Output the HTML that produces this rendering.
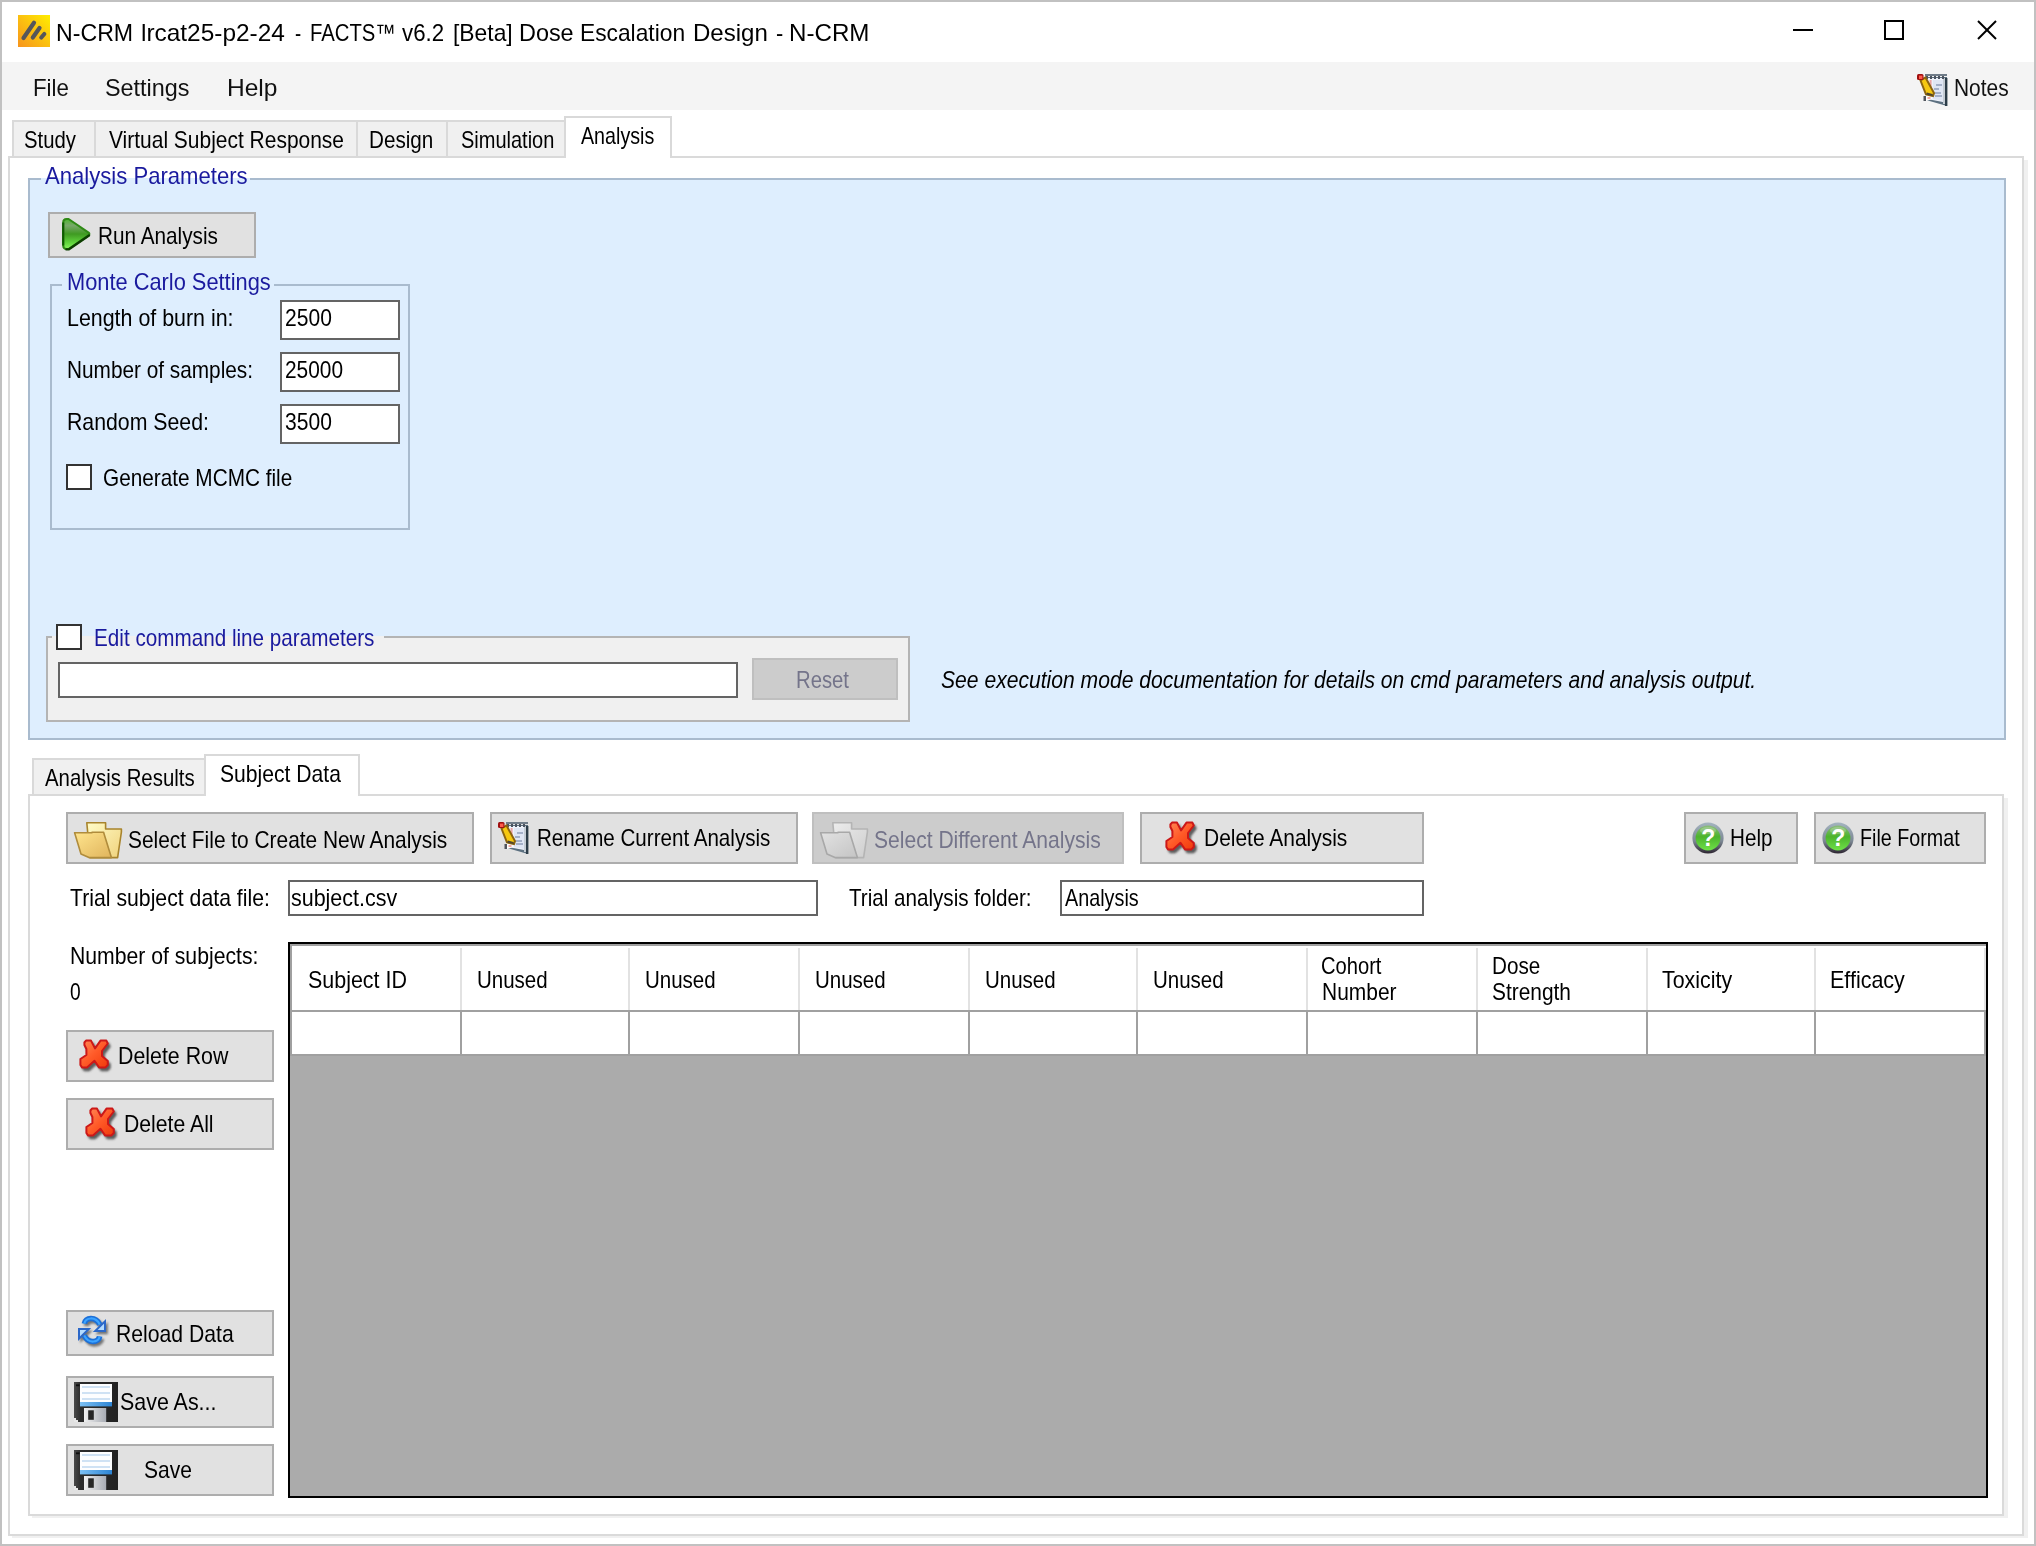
<!DOCTYPE html>
<html lang="en"><head><meta charset="utf-8"><title>N-CRM lrcat25-p2-24 - FACTS™ v6.2 [Beta] Dose Escalation Design - N-CRM</title>
<style>
html,body{margin:0;padding:0;}
body{width:2036px;height:1546px;position:relative;overflow:hidden;background:#fff;font-family:"Liberation Sans",sans-serif;}
.b{position:absolute;box-sizing:border-box;}
.t{position:absolute;white-space:pre;line-height:30px;transform-origin:0 0;display:block;}
svg{position:absolute;overflow:visible;}
</style></head>
<body>
<div class="b" style="left:0px;top:0px;width:2036px;height:1546px;background:#fff;border:2px solid #c1c1c1;"></div>
<svg width="0" height="0" style="left:0;top:0"><defs>
<linearGradient id="ig" x1="1" y1="0" x2="0" y2="1"><stop offset="0" stop-color="#ffee00"/><stop offset="0.5" stop-color="#fbc010"/><stop offset="1" stop-color="#f7941d"/></linearGradient>
<linearGradient id="pg" x1="0" y1="0" x2="0" y2="1"><stop offset="0" stop-color="#4cb62e"/><stop offset="0.22" stop-color="#78a86a"/><stop offset="0.5" stop-color="#3f9a22"/><stop offset="0.8" stop-color="#62d63e"/><stop offset="1" stop-color="#8cf562"/></linearGradient>
<linearGradient id="fb" x1="0" y1="0" x2="1" y2="1"><stop offset="0" stop-color="#fffcc8"/><stop offset="1" stop-color="#f0d27c"/></linearGradient>
<linearGradient id="ff" x1="0" y1="0" x2="1" y2="1"><stop offset="0" stop-color="#ffe58e"/><stop offset="1" stop-color="#e0b45c"/></linearGradient>
<linearGradient id="gb" x1="0" y1="0" x2="1" y2="1"><stop offset="0" stop-color="#ececec"/><stop offset="1" stop-color="#cecece"/></linearGradient>
<linearGradient id="gf" x1="0" y1="0" x2="1" y2="1"><stop offset="0" stop-color="#e2e2e2"/><stop offset="1" stop-color="#c4c4c4"/></linearGradient>
<linearGradient id="xg" x1="0" y1="0" x2="1" y2="1"><stop offset="0" stop-color="#ff8a58"/><stop offset="0.5" stop-color="#ff5a28"/><stop offset="1" stop-color="#f03a0c"/></linearGradient>
<linearGradient id="hr" x1="0" y1="0" x2="0" y2="1"><stop offset="0" stop-color="#a4b4c0"/><stop offset="0.6" stop-color="#7c8894"/><stop offset="1" stop-color="#2c2430"/></linearGradient>
<linearGradient id="hg" x1="0" y1="0" x2="0" y2="1"><stop offset="0" stop-color="#8cbc7c"/><stop offset="0.45" stop-color="#4cb42c"/><stop offset="1" stop-color="#6ee048"/></linearGradient>
<linearGradient id="fl" x1="0" y1="0" x2="1" y2="0"><stop offset="0" stop-color="#7cc0f4"/><stop offset="1" stop-color="#2c84d4"/></linearGradient>
<linearGradient id="fs" x1="0" y1="0" x2="1" y2="0"><stop offset="0" stop-color="#f0f0f0"/><stop offset="1" stop-color="#a8acb4"/></linearGradient>
<linearGradient id="fk" x1="0" y1="0" x2="1" y2="0"><stop offset="0" stop-color="#4a4a4a"/><stop offset="0.15" stop-color="#2c2c2c"/><stop offset="1" stop-color="#222"/></linearGradient>
<linearGradient id="ra" x1="0" y1="0" x2="0" y2="1"><stop offset="0" stop-color="#1c84f0"/><stop offset="1" stop-color="#2c6cd0"/></linearGradient>
<filter id="bl" x="-30%" y="-30%" width="160%" height="160%"><feGaussianBlur stdDeviation="0.9"/></filter>
<filter id="bl2" x="-30%" y="-30%" width="160%" height="160%"><feGaussianBlur stdDeviation="0.6"/></filter>
</defs></svg>
<svg style="left:18px;top:15px" width="32" height="32" viewBox="0 0 32 32"><rect width="32" height="32" fill="url(#ig)"/><g stroke="#55565a" stroke-width="4.2" stroke-linecap="round" filter="url(#bl2)"><line x1="5.5" y1="23" x2="16" y2="7.8"/><line x1="14.8" y1="22.5" x2="21.5" y2="13"/><line x1="23.3" y1="22.5" x2="26.3" y2="19"/></g></svg>
<span class="t" style="left:56.06px;top:18.07px;font-size:24px;color:#000;transform:scaleX(0.9642);">N-CRM</span>
<span class="t" style="left:141.06px;top:18.07px;font-size:24px;color:#000;transform:scaleX(1.0173);">lrcat25-p2-24</span>
<span class="t" style="left:294.60px;top:18.07px;font-size:24px;color:#000;transform:scaleX(0.7725);">-</span>
<span class="t" style="left:309.70px;top:18.07px;font-size:24px;color:#000;transform:scaleX(0.8448);">FACTS™</span>
<span class="t" style="left:401.76px;top:18.07px;font-size:24px;color:#000;transform:scaleX(0.9276);">v6.2</span>
<span class="t" style="left:452.70px;top:18.07px;font-size:24px;color:#000;transform:scaleX(0.9517);">[Beta]</span>
<span class="t" style="left:519.44px;top:18.07px;font-size:24px;color:#000;transform:scaleX(0.9750);">Dose</span>
<span class="t" style="left:580.44px;top:18.07px;font-size:24px;color:#000;transform:scaleX(0.9488);">Escalation</span>
<span class="t" style="left:693.06px;top:18.07px;font-size:24px;color:#000;transform:scaleX(1.0019);">Design</span>
<span class="t" style="left:775.78px;top:18.07px;font-size:24px;color:#000;transform:scaleX(0.9075);">-</span>
<span class="t" style="left:789.44px;top:18.07px;font-size:24px;color:#000;transform:scaleX(1.0063);">N-CRM</span>
<svg style="left:1780px;top:10px" width="240" height="44" viewBox="0 0 240 44"><g stroke="#000" stroke-width="2" fill="none"><line x1="13" y1="20" x2="33" y2="20"/><rect x="105" y="11" width="18" height="18"/><line x1="198" y1="11" x2="216" y2="29"/><line x1="216" y1="11" x2="198" y2="29"/></g></svg>
<div class="b" style="left:2px;top:62px;width:2032px;height:48px;background:#f4f4f4;"></div>
<span class="t" style="left:32.50px;top:73.07px;font-size:24px;color:#111;transform:scaleX(0.9277);">File</span>
<span class="t" style="left:105.42px;top:73.07px;font-size:24px;color:#111;transform:scaleX(0.9749);">Settings</span>
<span class="t" style="left:227.42px;top:73.07px;font-size:24px;color:#111;transform:scaleX(1.0224);">Help</span>
<span class="t" style="left:1954.40px;top:73.07px;font-size:24px;color:#111;transform:scaleX(0.8714);">Notes</span>
<div class="b" style="left:12px;top:160px;width:2016px;height:1378px;background:#f0f0f0;"></div>
<div class="b" style="left:8px;top:156px;width:2016px;height:1380px;background:#fff;border:2px solid #dadada;"></div>
<div class="b" style="left:12px;top:120px;width:554px;height:38px;background:#f0f0f0;border:2px solid #d9d9d9;"></div>
<div class="b" style="left:94px;top:122px;width:2px;height:34px;background:#d9d9d9;"></div>
<div class="b" style="left:356px;top:122px;width:2px;height:34px;background:#d9d9d9;"></div>
<div class="b" style="left:446px;top:122px;width:2px;height:34px;background:#d9d9d9;"></div>
<div class="b" style="left:564px;top:116px;width:108px;height:42px;background:#fff;border:2px solid #d9d9d9;border-bottom:none;"></div>
<span class="t" style="left:24.22px;top:125.07px;font-size:24px;color:#000;transform:scaleX(0.8459);">Study</span>
<span class="t" style="left:109.46px;top:125.07px;font-size:24px;color:#000;transform:scaleX(0.8735);">Virtual Subject Response</span>
<span class="t" style="left:369.42px;top:125.07px;font-size:24px;color:#000;transform:scaleX(0.8605);">Design</span>
<span class="t" style="left:460.94px;top:125.07px;font-size:24px;color:#000;transform:scaleX(0.8330);">Simulation</span>
<span class="t" style="left:581.20px;top:121.07px;font-size:24px;color:#000;transform:scaleX(0.8198);">Analysis</span>
<div class="b" style="left:28px;top:178px;width:1978px;height:562px;background:#deeefe;border:2px solid #a9bbce;"></div>
<div class="b" style="left:41px;top:166px;width:209px;height:12px;background:#fff;"></div>
<div class="b" style="left:41px;top:178px;width:209px;height:2px;background:#deeefe;"></div>
<span class="t" style="left:44.84px;top:161.07px;font-size:24px;color:#1a1a9e;transform:scaleX(0.9209);">Analysis Parameters</span>
<div class="b" style="left:48px;top:212px;width:208px;height:46px;background:#e1e1e1;border:2px solid #adadad;"></div>
<svg style="left:60px;top:216px" width="32" height="36" viewBox="0 0 32 36"><path d="M3.2 6.5 Q3.2 3 6.5 3 L8.6 3 L28.6 16.6 Q30.2 18 28.6 19.4 L8.6 33 L6.5 33 Q3.2 33 3.2 29.5 Z" fill="url(#pg)" stroke="#2f8a16" stroke-width="2" stroke-linejoin="round"/><path d="M3.2 6.5 L3.2 29.5" stroke="#0e5c00" stroke-width="2.2" fill="none"/><path d="M6.5 33.4 L8.6 33.4 L29 19.4" stroke="#0c3e00" stroke-width="2.4" stroke-linecap="round" stroke-linejoin="round" fill="none"/></svg>
<span class="t" style="left:98.20px;top:221.07px;font-size:24px;color:#000;transform:scaleX(0.8647);">Run Analysis</span>
<div class="b" style="left:50px;top:284px;width:360px;height:246px;border:2px solid #a9bbce;"></div>
<div class="b" style="left:62px;top:284px;width:212px;height:2px;background:#deeefe;"></div>
<span class="t" style="left:66.68px;top:267.07px;font-size:24px;color:#1a1a9e;transform:scaleX(0.9088);">Monte Carlo Settings</span>
<span class="t" style="left:67.24px;top:303.07px;font-size:24px;color:#000;transform:scaleX(0.8916);">Length of burn in:</span>
<div class="b" style="left:280px;top:300px;width:120px;height:40px;background:#fff;border:2px solid #646464;"></div>
<span class="t" style="left:284.70px;top:303.07px;font-size:24px;color:#000;transform:scaleX(0.8774);">2500</span>
<span class="t" style="left:67.24px;top:355.07px;font-size:24px;color:#000;transform:scaleX(0.8663);">Number of samples:</span>
<div class="b" style="left:280px;top:352px;width:120px;height:40px;background:#fff;border:2px solid #646464;"></div>
<span class="t" style="left:284.70px;top:355.07px;font-size:24px;color:#000;transform:scaleX(0.8701);">25000</span>
<span class="t" style="left:67.24px;top:407.07px;font-size:24px;color:#000;transform:scaleX(0.8864);">Random Seed:</span>
<div class="b" style="left:280px;top:404px;width:120px;height:40px;background:#fff;border:2px solid #646464;"></div>
<span class="t" style="left:284.70px;top:407.07px;font-size:24px;color:#000;transform:scaleX(0.8774);">3500</span>
<div class="b" style="left:66px;top:464px;width:26px;height:26px;background:#fff;border:2px solid #333;"></div>
<span class="t" style="left:103.48px;top:463.07px;font-size:24px;color:#000;transform:scaleX(0.8652);">Generate MCMC file</span>
<div class="b" style="left:46px;top:636px;width:864px;height:86px;background:#f0f0f0;border:2px solid #b4b4b4;"></div>
<div class="b" style="left:52px;top:636px;width:332px;height:2px;background:#f0f0f0;"></div>
<div class="b" style="left:52px;top:624px;width:332px;height:12px;background:#deeefe;"></div>
<div class="b" style="left:56px;top:624px;width:26px;height:26px;background:#fff;border:2px solid #333;"></div>
<span class="t" style="left:94.24px;top:623.07px;font-size:24px;color:#1a1a9e;transform:scaleX(0.8616);">Edit command line parameters</span>
<div class="b" style="left:58px;top:662px;width:680px;height:36px;background:#fff;border:2px solid #646464;"></div>
<div class="b" style="left:752px;top:658px;width:146px;height:42px;background:#cccccc;border:2px solid #bfbfbf;"></div>
<span class="t" style="left:795.96px;top:665.07px;font-size:24px;color:#74748a;transform:scaleX(0.8444);">Reset</span>
<span class="t" style="left:941.30px;top:665.07px;font-size:24px;color:#000;transform:scaleX(0.8792);font-style:italic;">See execution mode documentation for details on cmd parameters and analysis output.</span>
<div class="b" style="left:32px;top:798px;width:1976px;height:720px;background:#f0f0f0;"></div>
<div class="b" style="left:28px;top:794px;width:1976px;height:722px;background:#fff;border:2px solid #dadada;"></div>
<div class="b" style="left:32px;top:758px;width:175px;height:38px;background:#f0f0f0;border:2px solid #d9d9d9;"></div>
<div class="b" style="left:204px;top:754px;width:156px;height:42px;background:#fff;border:2px solid #d9d9d9;border-bottom:none;"></div>
<span class="t" style="left:45.10px;top:763.07px;font-size:24px;color:#000;transform:scaleX(0.8500);">Analysis Results</span>
<span class="t" style="left:220.30px;top:759.07px;font-size:24px;color:#000;transform:scaleX(0.8797);">Subject Data</span>
<div class="b" style="left:66px;top:812px;width:408px;height:52px;background:#e1e1e1;border:2px solid #adadad;"></div>
<span class="t" style="left:128.30px;top:825.07px;font-size:24px;color:#000;transform:scaleX(0.8703);">Select File to Create New Analysis</span>
<div class="b" style="left:490px;top:812px;width:308px;height:52px;background:#e1e1e1;border:2px solid #adadad;"></div>
<span class="t" style="left:536.50px;top:823.07px;font-size:24px;color:#000;transform:scaleX(0.8574);">Rename Current Analysis</span>
<div class="b" style="left:812px;top:812px;width:312px;height:52px;background:#cccccc;border:2px solid #bfbfbf;"></div>
<span class="t" style="left:874.30px;top:825.07px;font-size:24px;color:#74748a;transform:scaleX(0.8775);">Select Different Analysis</span>
<div class="b" style="left:1140px;top:812px;width:284px;height:52px;background:#e1e1e1;border:2px solid #adadad;"></div>
<span class="t" style="left:1203.50px;top:823.07px;font-size:24px;color:#000;transform:scaleX(0.8732);">Delete Analysis</span>
<div class="b" style="left:1684px;top:812px;width:114px;height:52px;background:#e1e1e1;border:2px solid #adadad;"></div>
<span class="t" style="left:1729.50px;top:823.07px;font-size:24px;color:#000;transform:scaleX(0.8612);">Help</span>
<div class="b" style="left:1814px;top:812px;width:172px;height:52px;background:#e1e1e1;border:2px solid #adadad;"></div>
<span class="t" style="left:1859.50px;top:823.07px;font-size:24px;color:#000;transform:scaleX(0.8213);">File Format</span>
<span class="t" style="left:70.30px;top:883.07px;font-size:24px;color:#000;transform:scaleX(0.8850);">Trial subject data file:</span>
<div class="b" style="left:288px;top:880px;width:530px;height:36px;background:#fff;border:2px solid #646464;"></div>
<span class="t" style="left:291.30px;top:883.07px;font-size:24px;color:#000;transform:scaleX(0.8941);">subject.csv</span>
<span class="t" style="left:849.30px;top:883.07px;font-size:24px;color:#000;transform:scaleX(0.8592);">Trial analysis folder:</span>
<div class="b" style="left:1060px;top:880px;width:364px;height:36px;background:#fff;border:2px solid #646464;"></div>
<span class="t" style="left:1065.30px;top:883.07px;font-size:24px;color:#000;transform:scaleX(0.8247);">Analysis</span>
<span class="t" style="left:69.50px;top:941.07px;font-size:24px;color:#000;transform:scaleX(0.8826);">Number of subjects:</span>
<span class="t" style="left:70.30px;top:977.07px;font-size:24px;color:#000;transform:scaleX(0.8000);">0</span>
<div class="b" style="left:288px;top:942px;width:1700px;height:556px;background:#ababab;border:2px solid #000;"></div>
<div class="b" style="left:290px;top:944px;width:1696px;height:2px;background:#a0a0a0;"></div>
<div class="b" style="left:290px;top:946px;width:1696px;height:64px;background:#fff;"></div>
<div class="b" style="left:290px;top:1012px;width:1696px;height:42px;background:#fff;"></div>
<div class="b" style="left:290px;top:1010px;width:1696px;height:2px;background:#a0a0a0;"></div>
<div class="b" style="left:290px;top:1054px;width:1696px;height:2px;background:#a0a0a0;"></div>
<div class="b" style="left:290px;top:944px;width:2px;height:112px;background:#a0a0a0;"></div>
<div class="b" style="left:460px;top:948px;width:2px;height:62px;background:#e2e2e2;"></div>
<div class="b" style="left:460px;top:1010px;width:2px;height:44px;background:#a0a0a0;"></div>
<div class="b" style="left:628px;top:948px;width:2px;height:62px;background:#e2e2e2;"></div>
<div class="b" style="left:628px;top:1010px;width:2px;height:44px;background:#a0a0a0;"></div>
<div class="b" style="left:798px;top:948px;width:2px;height:62px;background:#e2e2e2;"></div>
<div class="b" style="left:798px;top:1010px;width:2px;height:44px;background:#a0a0a0;"></div>
<div class="b" style="left:968px;top:948px;width:2px;height:62px;background:#e2e2e2;"></div>
<div class="b" style="left:968px;top:1010px;width:2px;height:44px;background:#a0a0a0;"></div>
<div class="b" style="left:1136px;top:948px;width:2px;height:62px;background:#e2e2e2;"></div>
<div class="b" style="left:1136px;top:1010px;width:2px;height:44px;background:#a0a0a0;"></div>
<div class="b" style="left:1306px;top:948px;width:2px;height:62px;background:#e2e2e2;"></div>
<div class="b" style="left:1306px;top:1010px;width:2px;height:44px;background:#a0a0a0;"></div>
<div class="b" style="left:1476px;top:948px;width:2px;height:62px;background:#e2e2e2;"></div>
<div class="b" style="left:1476px;top:1010px;width:2px;height:44px;background:#a0a0a0;"></div>
<div class="b" style="left:1646px;top:948px;width:2px;height:62px;background:#e2e2e2;"></div>
<div class="b" style="left:1646px;top:1010px;width:2px;height:44px;background:#a0a0a0;"></div>
<div class="b" style="left:1814px;top:948px;width:2px;height:62px;background:#e2e2e2;"></div>
<div class="b" style="left:1814px;top:1010px;width:2px;height:44px;background:#a0a0a0;"></div>
<div class="b" style="left:1984px;top:948px;width:2px;height:62px;background:#e2e2e2;"></div>
<div class="b" style="left:1984px;top:1010px;width:2px;height:44px;background:#a0a0a0;"></div>
<span class="t" style="left:308.30px;top:965.07px;font-size:24px;color:#000;transform:scaleX(0.8937);">Subject ID</span>
<span class="t" style="left:477.30px;top:965.07px;font-size:24px;color:#000;transform:scaleX(0.8542);">Unused</span>
<span class="t" style="left:645.30px;top:965.07px;font-size:24px;color:#000;transform:scaleX(0.8542);">Unused</span>
<span class="t" style="left:815.30px;top:965.07px;font-size:24px;color:#000;transform:scaleX(0.8542);">Unused</span>
<span class="t" style="left:985.30px;top:965.07px;font-size:24px;color:#000;transform:scaleX(0.8542);">Unused</span>
<span class="t" style="left:1153.30px;top:965.07px;font-size:24px;color:#000;transform:scaleX(0.8542);">Unused</span>
<span class="t" style="left:1321.30px;top:951.07px;font-size:24px;color:#000;transform:scaleX(0.8389);">Cohort</span>
<span class="t" style="left:1321.50px;top:977.07px;font-size:24px;color:#000;transform:scaleX(0.8729);">Number</span>
<span class="t" style="left:1491.50px;top:951.07px;font-size:24px;color:#000;transform:scaleX(0.8607);">Dose</span>
<span class="t" style="left:1492.30px;top:977.07px;font-size:24px;color:#000;transform:scaleX(0.8703);">Strength</span>
<span class="t" style="left:1662.30px;top:965.07px;font-size:24px;color:#000;transform:scaleX(0.8911);">Toxicity</span>
<span class="t" style="left:1829.50px;top:965.07px;font-size:24px;color:#000;transform:scaleX(0.8952);">Efficacy</span>
<div class="b" style="left:66px;top:1030px;width:208px;height:52px;background:#e1e1e1;border:2px solid #adadad;"></div>
<span class="t" style="left:117.50px;top:1041.07px;font-size:24px;color:#000;transform:scaleX(0.8896);">Delete Row</span>
<div class="b" style="left:66px;top:1098px;width:208px;height:52px;background:#e1e1e1;border:2px solid #adadad;"></div>
<span class="t" style="left:123.50px;top:1109.07px;font-size:24px;color:#000;transform:scaleX(0.8832);">Delete All</span>
<div class="b" style="left:66px;top:1310px;width:208px;height:46px;background:#e1e1e1;border:2px solid #adadad;"></div>
<span class="t" style="left:115.50px;top:1319.07px;font-size:24px;color:#000;transform:scaleX(0.8821);">Reload Data</span>
<div class="b" style="left:66px;top:1376px;width:208px;height:52px;background:#e1e1e1;border:2px solid #adadad;"></div>
<span class="t" style="left:120.30px;top:1387.07px;font-size:24px;color:#000;transform:scaleX(0.8926);">Save As...</span>
<div class="b" style="left:66px;top:1444px;width:208px;height:52px;background:#e1e1e1;border:2px solid #adadad;"></div>
<span class="t" style="left:144.30px;top:1455.07px;font-size:24px;color:#000;transform:scaleX(0.8764);">Save</span>
<svg style="left:1917px;top:74px" width="32" height="32" viewBox="0 0 32 32"><path d="M9 3 L30 3 L30 32 L9 26 Z" fill="#5c7080"/><rect x="26" y="4" width="2" height="26" fill="#c4ccd4"/><rect x="28" y="4" width="2.4" height="28" fill="#2c3c48"/><path d="M10 4 L26 4 L26 28 L10 25 Z" fill="#eef2fa"/><path d="M16 6 L26 6 L26 27 L16 25 Z" fill="#dfe6f4"/><g stroke="#4c5460" stroke-width="2"><line x1="10" y1="1" x2="10" y2="5"/><line x1="14" y1="1" x2="14" y2="5"/><line x1="18" y1="1" x2="18" y2="5"/><line x1="22" y1="1" x2="22" y2="5"/><line x1="26" y1="1" x2="26" y2="5"/></g><rect x="8" y="0" width="22" height="2" fill="#707c88"/><g stroke="#a4b0c8" stroke-width="2"><line x1="19" y1="11" x2="25" y2="11"/><line x1="17" y1="15" x2="22" y2="15"/><line x1="18" y1="19" x2="24" y2="19"/><line x1="18" y1="22" x2="25" y2="22"/></g><rect x="12.6" y="6" width="2" height="7" fill="#eca4a4"/><path d="M8 21 L14 21 L15 25 L9 27 Z" fill="#fff"/><rect x="10.5" y="23" width="3" height="2" fill="#f4a8a0"/><rect x="6.5" y="22" width="2.5" height="5" fill="#50545c"/><path d="M3.5 6.5 L8.5 3.5 L17 19 L16 22 L9 20.5 Z" fill="#f6c810" stroke="#8c6410" stroke-width="2"/><path d="M9 20.5 L16 22 L15.4 20 L10 18.5 Z" fill="#4c4430"/><rect x="0" y="0" width="6.5" height="6" rx="1.5" fill="#a01010"/><rect x="2" y="1.6" width="3.4" height="3.4" fill="#ff5c4c"/></svg>
<svg style="left:73px;top:821px" width="50" height="38" viewBox="0 0 50 38"><path d="M13.8 1.8 L32.6 1.8 L32.6 8 L48.4 8 L48.4 11 L44.6 36.6 L17 36.6 Z" fill="url(#fb)" stroke="#a8842c" stroke-width="1.6" stroke-linejoin="round"/><path d="M1.6 11.8 L19 11.8 L19 11.2 L30.6 11.2 L31.4 14 L38.4 36.6 L16 36.6 L8 33 Z" fill="url(#ff)" stroke="#b08c3c" stroke-width="1.6" stroke-linejoin="round"/></svg>
<svg style="left:498px;top:822px" width="32" height="32" viewBox="0 0 32 32"><path d="M9 3 L30 3 L30 32 L9 26 Z" fill="#5c7080"/><rect x="26" y="4" width="2" height="26" fill="#c4ccd4"/><rect x="28" y="4" width="2.4" height="28" fill="#2c3c48"/><path d="M10 4 L26 4 L26 28 L10 25 Z" fill="#eef2fa"/><path d="M16 6 L26 6 L26 27 L16 25 Z" fill="#dfe6f4"/><g stroke="#4c5460" stroke-width="2"><line x1="10" y1="1" x2="10" y2="5"/><line x1="14" y1="1" x2="14" y2="5"/><line x1="18" y1="1" x2="18" y2="5"/><line x1="22" y1="1" x2="22" y2="5"/><line x1="26" y1="1" x2="26" y2="5"/></g><rect x="8" y="0" width="22" height="2" fill="#707c88"/><g stroke="#a4b0c8" stroke-width="2"><line x1="19" y1="11" x2="25" y2="11"/><line x1="17" y1="15" x2="22" y2="15"/><line x1="18" y1="19" x2="24" y2="19"/><line x1="18" y1="22" x2="25" y2="22"/></g><rect x="12.6" y="6" width="2" height="7" fill="#eca4a4"/><path d="M8 21 L14 21 L15 25 L9 27 Z" fill="#fff"/><rect x="10.5" y="23" width="3" height="2" fill="#f4a8a0"/><rect x="6.5" y="22" width="2.5" height="5" fill="#50545c"/><path d="M3.5 6.5 L8.5 3.5 L17 19 L16 22 L9 20.5 Z" fill="#f6c810" stroke="#8c6410" stroke-width="2"/><path d="M9 20.5 L16 22 L15.4 20 L10 18.5 Z" fill="#4c4430"/><rect x="0" y="0" width="6.5" height="6" rx="1.5" fill="#a01010"/><rect x="2" y="1.6" width="3.4" height="3.4" fill="#ff5c4c"/></svg>
<svg style="left:819px;top:821px" width="50" height="38" viewBox="0 0 50 38"><path d="M13.8 1.8 L32.6 1.8 L32.6 8 L48.4 8 L48.4 11 L44.6 36.6 L17 36.6 Z" fill="url(#gb)" stroke="#b4b4b4" stroke-width="1.6" stroke-linejoin="round"/><path d="M1.6 11.8 L19 11.8 L19 11.2 L30.6 11.2 L31.4 14 L38.4 36.6 L16 36.6 L8 33 Z" fill="url(#gf)" stroke="#a8a8a8" stroke-width="1.6" stroke-linejoin="round"/></svg>
<svg style="left:1160px;top:816px" width="44" height="44" viewBox="0 0 44 44"><path d="M12 6.6 L17 6.6 L21 14.4 L26.5 6.6 L32.4 6.6 L33.8 9.5 L28 17 L28 22 L33.8 27 L33.8 31 L31.5 33.4 L25 33.4 L20.5 26.8 L13 33.4 L8 33.4 L6.4 31 L6.4 25 L12.4 21 L12.4 15 L10.4 11 L10.4 8.5 Z" transform="translate(2.2,3)" fill="#4a4a4a" fill-opacity="0.85" stroke="#4a4a4a" stroke-opacity="0.85" stroke-width="1.5" stroke-linejoin="round" filter="url(#bl)"/><path d="M12 6.6 L17 6.6 L21 14.4 L26.5 6.6 L32.4 6.6 L33.8 9.5 L28 17 L28 22 L33.8 27 L33.8 31 L31.5 33.4 L25 33.4 L20.5 26.8 L13 33.4 L8 33.4 L6.4 31 L6.4 25 L12.4 21 L12.4 15 L10.4 11 L10.4 8.5 Z" fill="url(#xg)" stroke="#cc1818" stroke-width="2" stroke-linejoin="round"/></svg>
<svg style="left:1692px;top:822px" width="32" height="32" viewBox="0 0 32 32"><circle cx="16" cy="16" r="15.6" fill="url(#hr)"/><circle cx="16" cy="16" r="12.4" fill="url(#hg)"/><ellipse cx="16" cy="8.5" rx="8" ry="3.6" fill="#fff" fill-opacity="0.22"/><text x="16.4" y="23.8" text-anchor="middle" font-family="Liberation Sans,sans-serif" font-weight="bold" font-size="23" fill="#fff">?</text></svg>
<svg style="left:1822px;top:822px" width="32" height="32" viewBox="0 0 32 32"><circle cx="16" cy="16" r="15.6" fill="url(#hr)"/><circle cx="16" cy="16" r="12.4" fill="url(#hg)"/><ellipse cx="16" cy="8.5" rx="8" ry="3.6" fill="#fff" fill-opacity="0.22"/><text x="16.4" y="23.8" text-anchor="middle" font-family="Liberation Sans,sans-serif" font-weight="bold" font-size="23" fill="#fff">?</text></svg>
<svg style="left:74px;top:1034px" width="44" height="44" viewBox="0 0 44 44"><path d="M12 6.6 L17 6.6 L21 14.4 L26.5 6.6 L32.4 6.6 L33.8 9.5 L28 17 L28 22 L33.8 27 L33.8 31 L31.5 33.4 L25 33.4 L20.5 26.8 L13 33.4 L8 33.4 L6.4 31 L6.4 25 L12.4 21 L12.4 15 L10.4 11 L10.4 8.5 Z" transform="translate(2.2,3)" fill="#4a4a4a" fill-opacity="0.85" stroke="#4a4a4a" stroke-opacity="0.85" stroke-width="1.5" stroke-linejoin="round" filter="url(#bl)"/><path d="M12 6.6 L17 6.6 L21 14.4 L26.5 6.6 L32.4 6.6 L33.8 9.5 L28 17 L28 22 L33.8 27 L33.8 31 L31.5 33.4 L25 33.4 L20.5 26.8 L13 33.4 L8 33.4 L6.4 31 L6.4 25 L12.4 21 L12.4 15 L10.4 11 L10.4 8.5 Z" fill="url(#xg)" stroke="#cc1818" stroke-width="2" stroke-linejoin="round"/></svg>
<svg style="left:80px;top:1102px" width="44" height="44" viewBox="0 0 44 44"><path d="M12 6.6 L17 6.6 L21 14.4 L26.5 6.6 L32.4 6.6 L33.8 9.5 L28 17 L28 22 L33.8 27 L33.8 31 L31.5 33.4 L25 33.4 L20.5 26.8 L13 33.4 L8 33.4 L6.4 31 L6.4 25 L12.4 21 L12.4 15 L10.4 11 L10.4 8.5 Z" transform="translate(2.2,3)" fill="#4a4a4a" fill-opacity="0.85" stroke="#4a4a4a" stroke-opacity="0.85" stroke-width="1.5" stroke-linejoin="round" filter="url(#bl)"/><path d="M12 6.6 L17 6.6 L21 14.4 L26.5 6.6 L32.4 6.6 L33.8 9.5 L28 17 L28 22 L33.8 27 L33.8 31 L31.5 33.4 L25 33.4 L20.5 26.8 L13 33.4 L8 33.4 L6.4 31 L6.4 25 L12.4 21 L12.4 15 L10.4 11 L10.4 8.5 Z" fill="url(#xg)" stroke="#cc1818" stroke-width="2" stroke-linejoin="round"/></svg>
<svg style="left:72px;top:1310px" width="44" height="44" viewBox="0 0 44 44"><g transform="translate(2,2.4)" filter="url(#bl)" opacity="0.75"><path d="M12.4 13.6 C13 7.6, 23.5 5.6, 27.8 14.6" stroke="#505050" stroke-width="5.4" fill="none"/><path d="M33 11.4 L33 21 L23.2 21 Z" fill="#505050" stroke="#505050" stroke-width="1.6"/><g transform="rotate(180 20 20)"><path d="M12.4 13.6 C13 7.6, 23.5 5.6, 27.8 14.6" stroke="#505050" stroke-width="5.4" fill="none"/><path d="M33 11.4 L33 21 L23.2 21 Z" fill="#505050" stroke="#505050" stroke-width="1.6"/></g></g><path d="M12.4 13.6 C13 7.6, 23.5 5.6, 27.8 14.6" stroke="#1c70d8" stroke-width="5.6" fill="none"/><path d="M12.4 13.6 C13 7.6, 23.5 5.6, 27.8 14.6" stroke="#3ca4ff" stroke-width="2.2" fill="none"/><path d="M33 11.4 L33 21 L23.2 21 Z" fill="#b4dcff" stroke="#2c68c8" stroke-width="2" stroke-linejoin="miter"/><g transform="rotate(180 20 20)"><path d="M12.4 13.6 C13 7.6, 23.5 5.6, 27.8 14.6" stroke="#1c70d8" stroke-width="5.6" fill="none"/><path d="M12.4 13.6 C13 7.6, 23.5 5.6, 27.8 14.6" stroke="#3ca4ff" stroke-width="2.2" fill="none"/><path d="M33 11.4 L33 21 L23.2 21 Z" fill="#b4dcff" stroke="#2c68c8" stroke-width="2" stroke-linejoin="miter"/></g></svg>
<svg style="left:74px;top:1382px" width="44" height="40" viewBox="0 0 44 40"><rect x="0" y="0" width="44" height="40" fill="url(#fk)"/><rect x="6" y="2" width="32" height="20" fill="#fdfeff"/><g fill="#cfe2f4"><rect x="8" y="4" width="28" height="2"/><rect x="8" y="10" width="28" height="2"/><rect x="8" y="16" width="28" height="2"/></g><rect x="6" y="20" width="32" height="4.4" fill="url(#fl)"/><rect x="10" y="26" width="22.2" height="14" fill="url(#fs)"/><rect x="14.2" y="28.3" width="5.6" height="9.5" fill="#262626"/><rect x="2" y="2.4" width="3.6" height="1.8" fill="#0c0c0c"/><path d="M0 36 L2 36 L2 38 L4 38 L4 40 L0 40 Z" fill="#e8e8e8"/></svg>
<svg style="left:74px;top:1450px" width="44" height="40" viewBox="0 0 44 40"><rect x="0" y="0" width="44" height="40" fill="url(#fk)"/><rect x="6" y="2" width="32" height="20" fill="#fdfeff"/><g fill="#cfe2f4"><rect x="8" y="4" width="28" height="2"/><rect x="8" y="10" width="28" height="2"/><rect x="8" y="16" width="28" height="2"/></g><rect x="6" y="20" width="32" height="4.4" fill="url(#fl)"/><rect x="10" y="26" width="22.2" height="14" fill="url(#fs)"/><rect x="14.2" y="28.3" width="5.6" height="9.5" fill="#262626"/><rect x="2" y="2.4" width="3.6" height="1.8" fill="#0c0c0c"/><path d="M0 36 L2 36 L2 38 L4 38 L4 40 L0 40 Z" fill="#e8e8e8"/></svg>
</body></html>
